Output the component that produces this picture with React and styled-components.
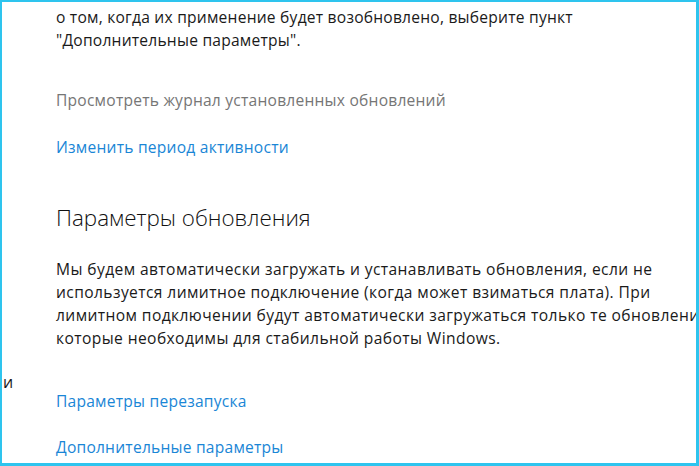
import React from "react";
import styled, { createGlobalStyle } from "styled-components";

const GlobalStyle = createGlobalStyle`
  html, body {
    margin: 0;
    padding: 0;
    background: #ffffff;
  }
  * {
    box-sizing: border-box;
  }
`;

const Frame = styled.div`
  width: 699px;
  height: 466px;
  border-style: solid;
  border-color: #2ec4ee;
  border-width: 2px 3px 3px 2px;
  background: #fff;
  overflow: hidden;
  display: flex;
  font-family: "Open Sans", "Noto Sans", sans-serif;
`;

const SideStrip = styled.div`
  width: 54px;
  flex: none;
  position: relative;
  overflow: hidden;
`;

const SideText = styled.span`
  position: absolute;
  left: 1px;
  top: 369px;
  font-size: 16px;
  line-height: 23px;
  color: #1a1a1a;
`;

const Content = styled.div`
  flex: 1;
  min-width: 0;
  display: flex;
  flex-direction: column;
  align-items: flex-start;
  padding-top: 4px;
`;

const Text = styled.p`
  margin: 0;
  font-size: 15.6px;
  letter-spacing: ${(p) => (p.$wide ? 0.4 : 0.22)}px;
  line-height: 23.3px;
  color: #1a1a1a;
  white-space: nowrap;
`;

const Link = styled.a`
  display: block;
  font-size: 15.6px;
  letter-spacing: 0.22px;
  line-height: 23px;
  color: ${(p) => (p.$muted ? "#767676" : "#1a86d6")};
  text-decoration: none;
  margin-top: ${(p) => p.$gap}px;
  cursor: pointer;
`;

const Heading = styled.h2`
  margin: 45px 0 0;
  font-size: 22.4px;
  font-weight: 300;
  line-height: 28px;
  color: #111;
`;

const Paragraph = styled(Text)`
  margin-top: 26px;
`;

export default function App() {
  return (
    <>
      <GlobalStyle />
      <Frame>
        <SideStrip>
          <SideText>и</SideText>
        </SideStrip>
        <Content>
          <Text>
            о том, когда их применение будет возобновлено, выберите пункт
            <br />
            "Дополнительные параметры".
          </Text>
          <Link $muted $gap={36}>
            Просмотреть журнал установленных обновлений
          </Link>
          <Link $gap={24}>Изменить период активности</Link>
          <Heading>Параметры обновления</Heading>
          <Paragraph $wide>
            Мы будем автоматически загружать и устанавливать обновления, если не
            <br />
            используется лимитное подключение (когда может взиматься плата). При
            <br />
            лимитном подключении будут автоматически загружаться только те обновления,
            <br />
            которые необходимы для стабильной работы Windows.
          </Paragraph>
          <Link $gap={39}>Параметры перезапуска</Link>
          <Link $gap={23}>Дополнительные параметры</Link>
        </Content>
      </Frame>
    </>
  );
}
